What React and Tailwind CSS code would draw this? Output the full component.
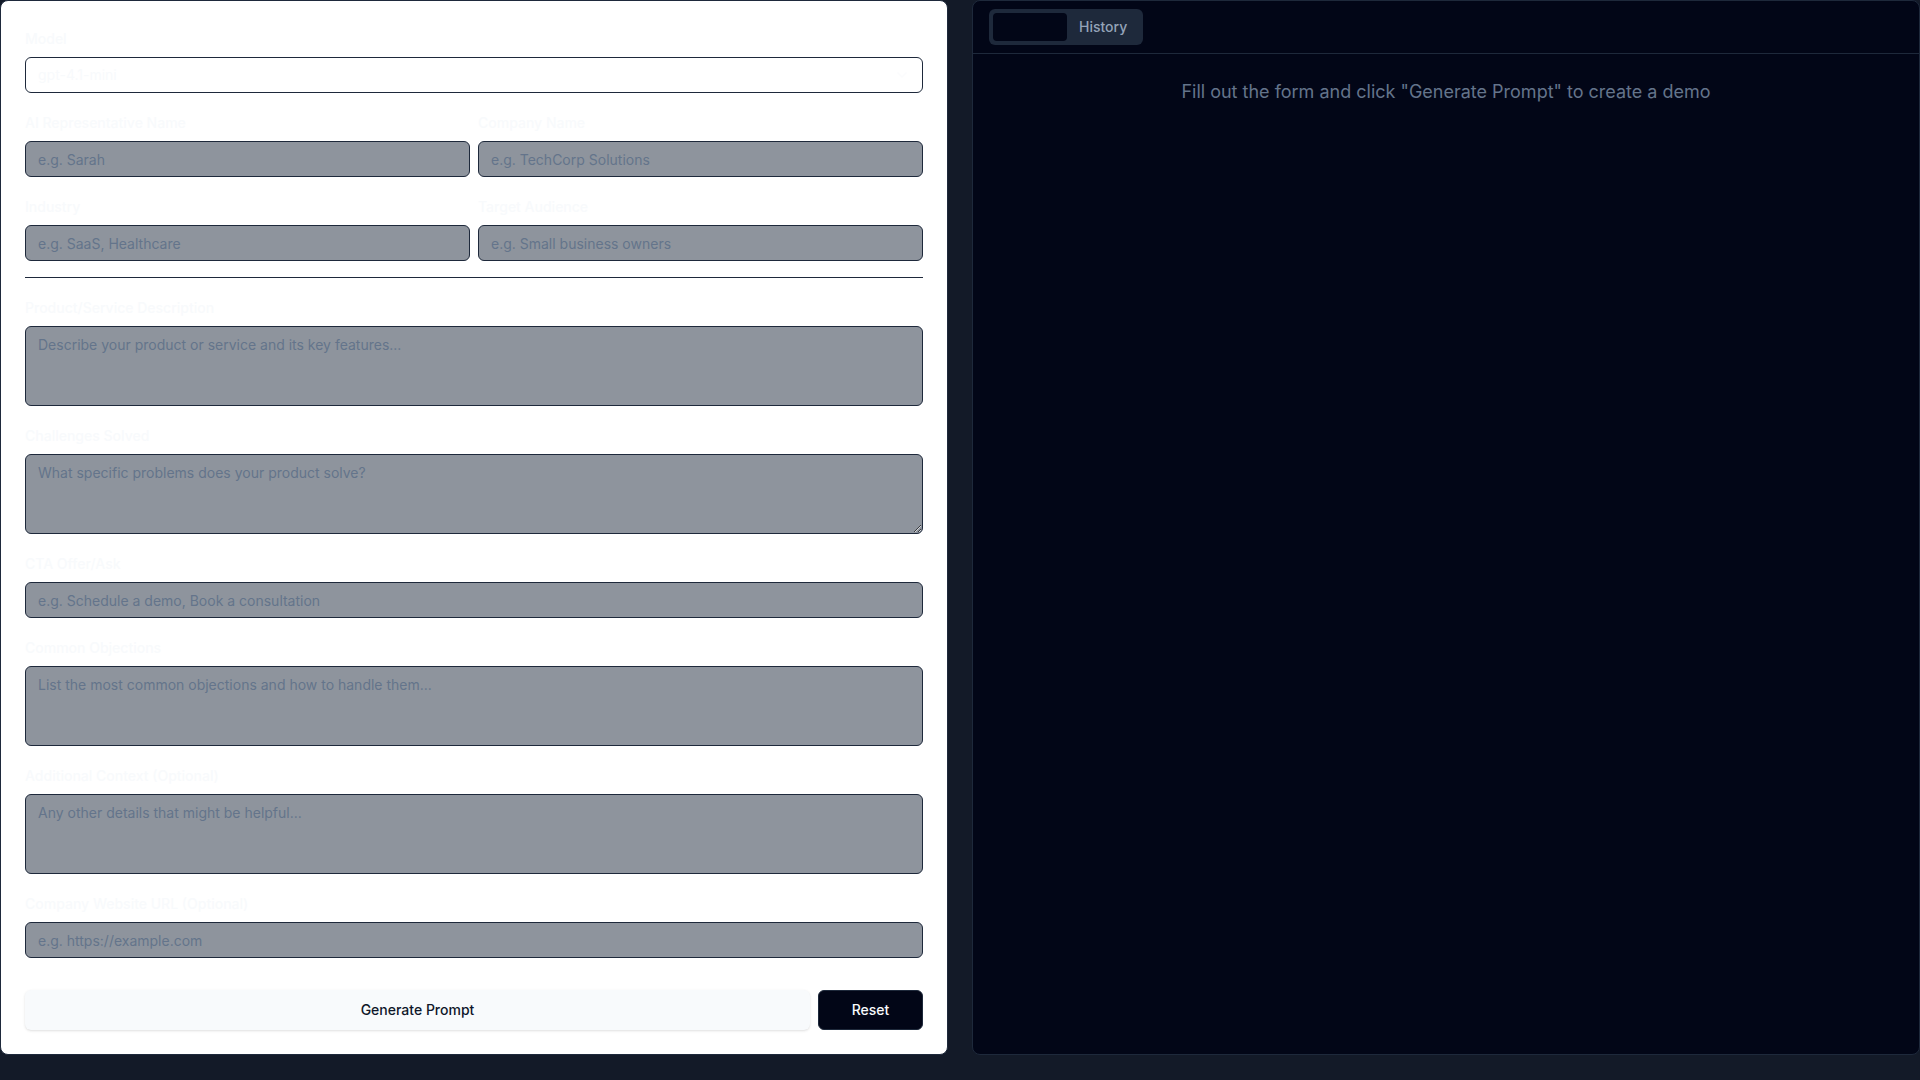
import React from "react";
import { ChevronDown } from "lucide-react";

const inputCls = "h-9 w-full rounded-md border border-[#1e293b] bg-[#1e293b]/50 px-3 py-1 text-sm text-[#f8fafc] placeholder:text-[#64748b] outline-none";
const areaCls = "block min-h-20 h-20 w-full rounded-md border border-[#1e293b] bg-[#1e293b]/50 px-3 py-2 text-sm text-[#f8fafc] placeholder:text-[#64748b] outline-none";

function Label({ children }) {
  return <label className="mb-2 block h-5 text-sm leading-5 font-medium text-[#f8fafc]">{children}</label>;
}

function TextField({ label, placeholder }) {
  return (
    <div>
      <Label>{label}</Label>
      <input className={inputCls} placeholder={placeholder} />
    </div>
  );
}

function AreaField({ label, placeholder, resize }) {
  return (
    <div>
      <Label>{label}</Label>
      <textarea className={`${areaCls} ${resize ? "resize-y" : "resize-none"}`} placeholder={placeholder} />
    </div>
  );
}

export default function App() {
  return (
    <div className="grid h-[1080px] grid-cols-2 gap-6 bg-[#131a28] pb-[25px] font-['Inter',sans-serif]">
      <div className="flex flex-col rounded-lg border border-[#1e293b] bg-white px-6 pt-7 pb-6">
        <div className="flex flex-col gap-5">
          <div>
            <Label>Model</Label>
            <div className="flex h-9 w-full items-center justify-between rounded-md border border-[#1e293b] bg-white px-3 text-sm text-[#f8fafc]">
              <span>gpt-4.1-mini</span>
              <ChevronDown className="h-4 w-4 opacity-50" />
            </div>
          </div>
          <div className="grid grid-cols-2 gap-2">
            <TextField label="AI Representative Name" placeholder="e.g. Sarah" />
            <TextField label="Company Name" placeholder="e.g. TechCorp Solutions" />
          </div>
          <div className="grid grid-cols-2 gap-2">
            <TextField label="Industry" placeholder="e.g. SaaS, Healthcare" />
            <TextField label="Target Audience" placeholder="e.g. Small business owners" />
          </div>
          <div className="-mt-1 h-px w-full bg-[#1e293b]" />
          <AreaField label="Product/Service Description" placeholder="Describe your product or service and its key features..." />
          <AreaField label="Challenges Solved" placeholder="What specific problems does your product solve?" resize />
          <TextField label="CTA Offer/Ask" placeholder="e.g. Schedule a demo, Book a consultation" />
          <AreaField label="Common Objections" placeholder="List the most common objections and how to handle them..." />
          <AreaField label="Additional Context (Optional)" placeholder="Any other details that might be helpful..." />
          <TextField label="Company Website URL (Optional)" placeholder="e.g. https://example.com" />
        </div>
        <div className="mt-8 flex gap-2">
          <button className="h-10 flex-1 rounded-md bg-[#f8fafc] text-sm font-medium text-[#0f172a] shadow-sm">Generate Prompt</button>
          <button className="h-10 w-[105px] rounded-md border border-[#1e293b] bg-[#020617] text-sm font-medium text-[#f8fafc]">Reset</button>
        </div>
      </div>
      <div className="flex flex-col rounded-lg border border-[#1e293b] bg-[#020617]">
        <div className="flex h-[53px] items-start border-b border-[#1e293b] px-4 pt-2">
          <div className="flex h-9 items-center rounded-md bg-[#1e293b] p-1">
            <div className="h-7 w-[74px] rounded-[4px] bg-[#020617]" />
            <div className="flex h-7 items-center px-3 text-sm font-medium text-[#94a3b8]">History</div>
          </div>
        </div>
        <div className="pt-6 text-center text-lg text-[#64748b]">
          Fill out the form and click "Generate Prompt" to create a demo
        </div>
      </div>
    </div>
  );
}
